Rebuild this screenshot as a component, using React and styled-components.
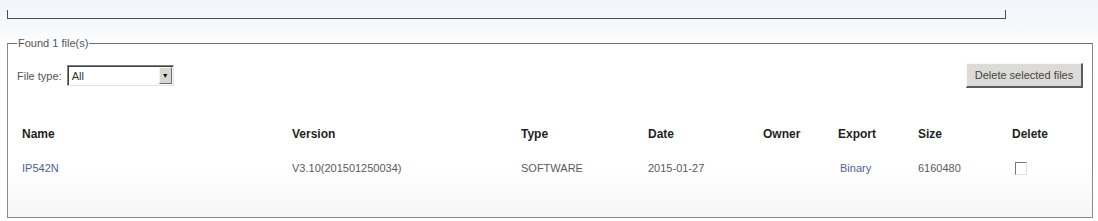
import styled, { createGlobalStyle } from "styled-components";

const GlobalStyle = createGlobalStyle`
  html, body {
    margin: 0;
    padding: 0;
  }
  body {
    background: linear-gradient(to bottom, #f1f5f9 0px, #f7f9fb 30px, #ffffff 48px);
    font-family: "Liberation Sans", Arial, sans-serif;
    font-size: 11px;
    color: #555;
    min-height: 221px;
  }
`;

const Page = styled.div`
  padding: 0 0 0 7px;
`;

const TopBox = styled.div`
  margin-top: 10px;
  width: 999px;
  height: 9px;
  box-sizing: border-box;
  border: 1px solid #4d4d4d;
  border-top: none;
`;

const Fieldset = styled.fieldset`
  margin: 18px 0 0 0;
  width: 1086px;
  height: 181px;
  box-sizing: border-box;
  border: 1px solid #8a8a8a;
  border-top-color: #6e6e6e;
  padding: 13px 9px 0 9px;
  background: linear-gradient(to bottom, #ffffff 70%, #f6f6f6 100%);
`;

const Legend = styled.legend`
  margin-left: 0;
  padding: 0 1px;
  line-height: 13px;
  color: #555;
`;

const Toolbar = styled.div`
  display: flex;
  justify-content: space-between;
  align-items: center;
  height: 25px;
`;

const FilterGroup = styled.label`
  display: flex;
  align-items: center;
  gap: 5px;
  color: #555;
`;

const SelectBox = styled.div`
  width: 107px;
  height: 21px;
  box-sizing: border-box;
  display: flex;
  align-items: center;
  justify-content: space-between;
  background: #fff;
  border-top: 1px solid #808080;
  border-left: 1px solid #808080;
  border-right: 1px solid #e4e4e4;
  border-bottom: 1px solid #e4e4e4;
  box-shadow: inset 1px 1px 0 #404040;
  padding: 1px 1px 1px 4px;
  color: #333;
`;

const ArrowButton = styled.span`
  width: 13px;
  height: 17px;
  box-sizing: border-box;
  display: flex;
  align-items: center;
  justify-content: center;
  background: #d8d6d0;
  border-top: 1px solid #f4f4f4;
  border-left: 1px solid #f4f4f4;
  border-right: 1px solid #6a6a6a;
  border-bottom: 1px solid #6a6a6a;
  font-size: 7px;
  color: #111;
`;

const ActionButton = styled.button`
  width: 117px;
  height: 25px;
  padding: 0;
  font-family: inherit;
  font-size: 11px;
  color: #444;
  background: #dcdbd8;
  border-top: 1px solid #f8f8f8;
  border-left: 1px solid #f8f8f8;
  border-right: 2px solid #5a5a5a;
  border-bottom: 2px solid #5a5a5a;
  cursor: pointer;
`;

const FileGrid = styled.div`
  display: grid;
  grid-template-columns: 270px 229px 127px 115px 75px 80px 94px 1fr;
  grid-auto-rows: 18px;
  row-gap: 16px;
  align-items: center;
  margin: 37px 0 0 5px;
`;

const HeadCell = styled.div`
  font-weight: bold;
  font-size: 12px;
  color: #1f1f1f;
`;

const Cell = styled.div`
  color: ${(p) => (p.$link ? "#4f5f8f" : "#5a5a5a")};
  padding-left: ${(p) => p.$indent || 0}px;
`;

const CheckBox = styled.span`
  display: block;
  width: 12px;
  height: 13px;
  box-sizing: border-box;
  margin-left: 3px;
  background: #fff;
  border-top: 1px solid #7a7a7a;
  border-left: 1px solid #7a7a7a;
  border-right: 1px solid #e2e2e2;
  border-bottom: 1px solid #e2e2e2;
`;

const columns = ["Name", "Version", "Type", "Date", "Owner", "Export", "Size", "Delete"];

const files = [
  {
    name: "IP542N",
    version: "V3.10(201501250034)",
    type: "SOFTWARE",
    date: "2015-01-27",
    owner: "",
    exportAs: "Binary",
    size: "6160480",
  },
];

export default function App() {
  return (
    <>
      <GlobalStyle />
      <Page>
        <TopBox />
        <Fieldset>
          <Legend>Found {files.length} file(s)</Legend>
          <Toolbar>
            <FilterGroup>
              File type:
              <SelectBox>
                All
                <ArrowButton>▼</ArrowButton>
              </SelectBox>
            </FilterGroup>
            <ActionButton>Delete selected files</ActionButton>
          </Toolbar>
          <FileGrid>
            {columns.map((c) => (
              <HeadCell key={c}>{c}</HeadCell>
            ))}
            {files.map((f) => [
              <Cell key="n" $link>{f.name}</Cell>,
              <Cell key="v">{f.version}</Cell>,
              <Cell key="t">{f.type}</Cell>,
              <Cell key="d">{f.date}</Cell>,
              <Cell key="o">{f.owner}</Cell>,
              <Cell key="e" $link $indent={2}>{f.exportAs}</Cell>,
              <Cell key="s">{f.size}</Cell>,
              <Cell key="c"><CheckBox /></Cell>,
            ])}
          </FileGrid>
        </Fieldset>
      </Page>
    </>
  );
}
